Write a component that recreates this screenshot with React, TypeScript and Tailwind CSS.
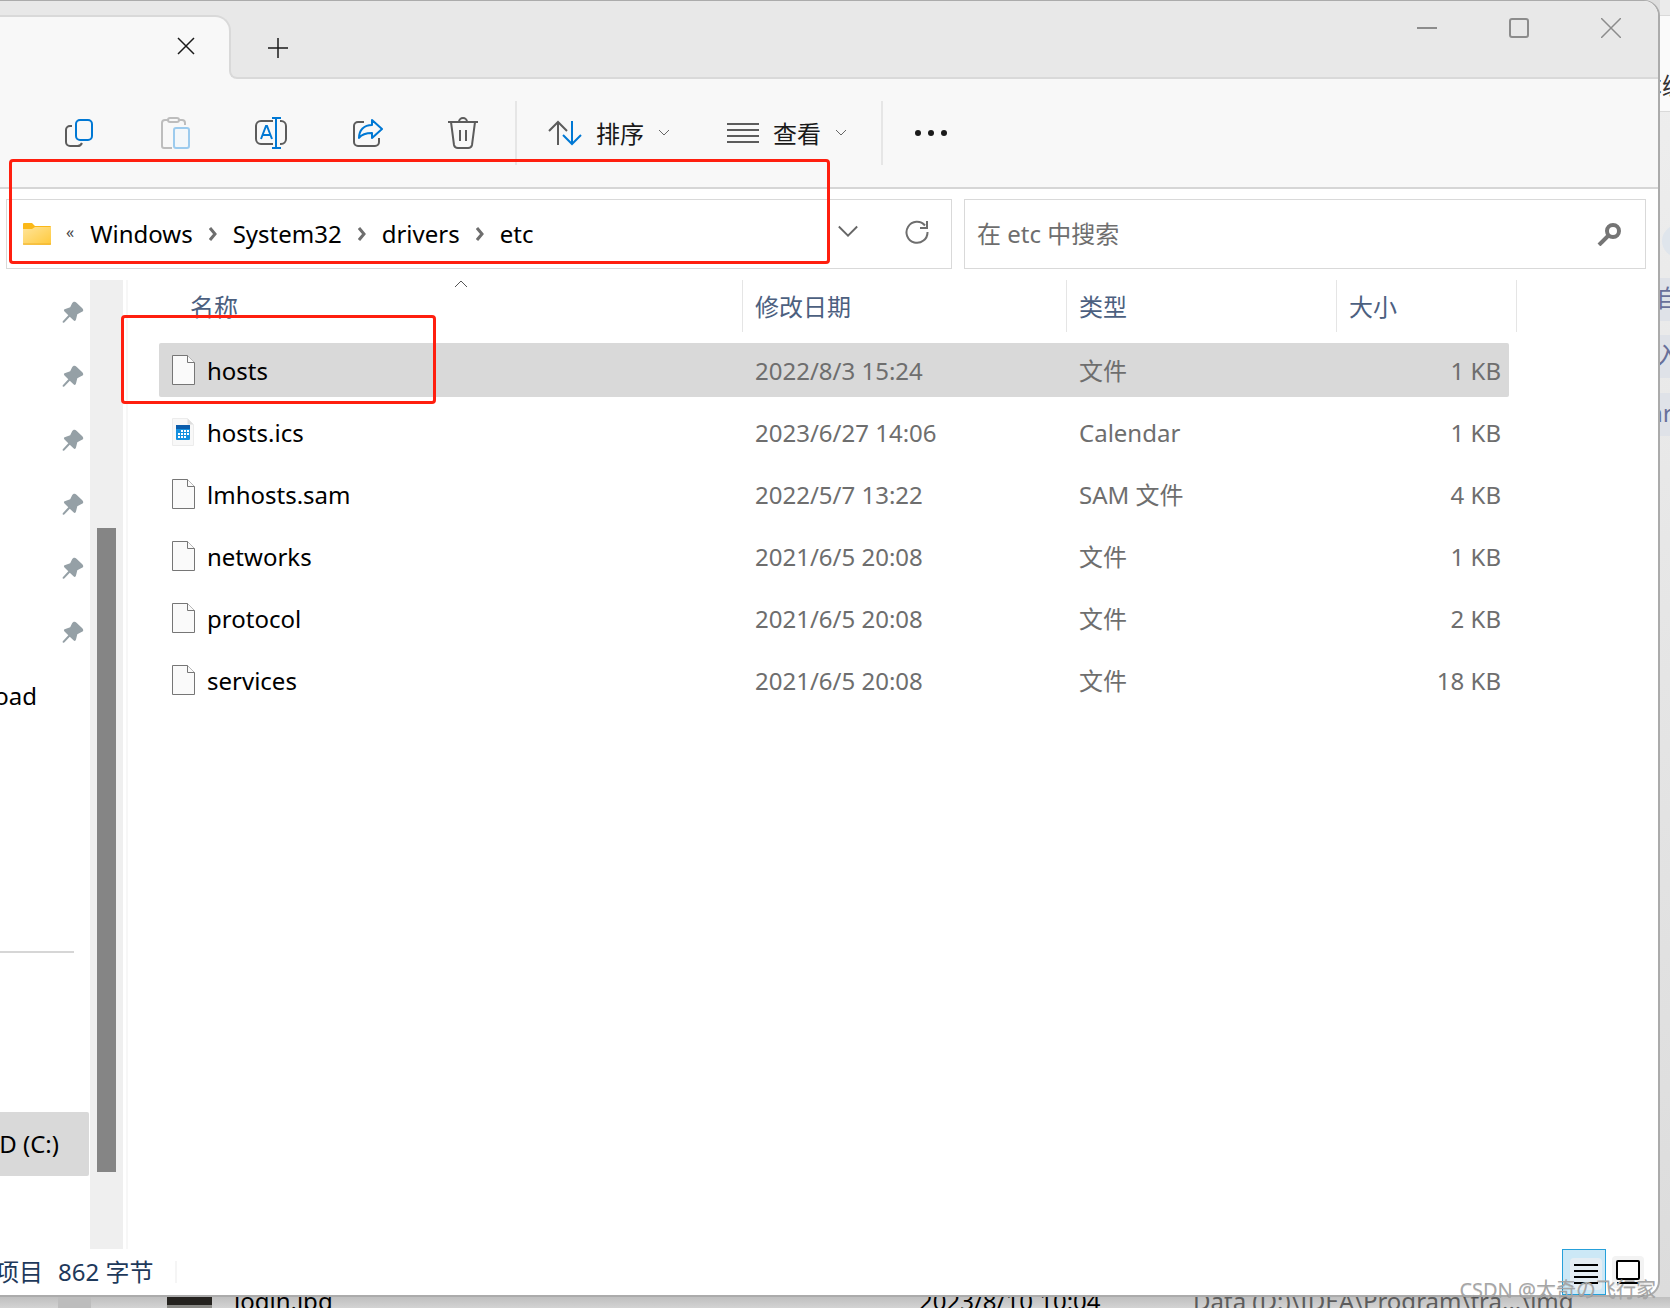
import type { ReactNode } from "react";
import { clsx } from "clsx";

interface FileEntry {
  name: string;
  modified: string;
  type: string;
  size: string;
  icon: "blank" | "calendar";
  selected?: boolean;
}

const files: FileEntry[] = [
  { name: "hosts", modified: "2022/8/3 15:24", type: "文件", size: "1 KB", icon: "blank", selected: true },
  { name: "hosts.ics", modified: "2023/6/27 14:06", type: "Calendar", size: "1 KB", icon: "calendar" },
  { name: "lmhosts.sam", modified: "2022/5/7 13:22", type: "SAM 文件", size: "4 KB", icon: "blank" },
  { name: "networks", modified: "2021/6/5 20:08", type: "文件", size: "1 KB", icon: "blank" },
  { name: "protocol", modified: "2021/6/5 20:08", type: "文件", size: "2 KB", icon: "blank" },
  { name: "services", modified: "2021/6/5 20:08", type: "文件", size: "18 KB", icon: "blank" },
];

const crumbs = ["Windows", "System32", "drivers", "etc"];
const pins = [1, 2, 3, 4, 5, 6];

const CopyIcon = () => (
  <svg width="32" height="32" viewBox="0 0 32 32" fill="none" strokeWidth="2">
    <path d="M9 9H7a4 4 0 0 0-4 4v12a4 4 0 0 0 4 4h7a5 5 0 0 0 5-3" stroke="#5c5c5c" />
    <rect x="13" y="3" width="16" height="20" rx="4" stroke="#0078d4" />
  </svg>
);

const PasteIcon = () => (
  <svg width="32" height="34" viewBox="0 0 32 34" fill="none" strokeWidth="2">
    <path d="M9 4H6a3 3 0 0 0-3 3v23a2 2 0 0 0 2 2h8M19 4h4a3 3 0 0 1 3 3v2" stroke="#bdbdbd" />
    <rect x="9" y="2" width="11" height="4" rx="2" stroke="#bdbdbd" />
    <rect x="15" y="12" width="15" height="20" rx="2" stroke="#9ccbee" fill="#f3f7fa" />
  </svg>
);

const RenameIcon = () => (
  <svg width="34" height="34" viewBox="0 0 34 34" fill="none" strokeWidth="2">
    <path d="M19 5H7a5 5 0 0 0-5 5v13a5 5 0 0 0 5 5h12M26 5h1a5 5 0 0 1 5 5v13a5 5 0 0 1-5 5h-1" stroke="#5c5c5c" />
    <path d="M7 23l5-13h1l5 13M9 19h8M22 2v30M18 2h9M18 32h9" stroke="#0078d4" />
  </svg>
);

const ShareIcon = () => (
  <svg width="32" height="32" viewBox="0 0 32 32" fill="none" strokeWidth="2" strokeLinejoin="round">
    <path d="M13 5H7a4 4 0 0 0-4 4v16a4 4 0 0 0 4 4h17a4 4 0 0 0 4-4v-4" stroke="#5c5c5c" />
    <path d="M21 3l10 9-10 9v-5c-6 0-10 1-13 5 0-8 5-13 13-13z" stroke="#0078d4" />
  </svg>
);

const TrashIcon = () => (
  <svg width="32" height="34" viewBox="0 0 32 34" fill="none" stroke="#5c5c5c" strokeWidth="2">
    <path d="M1 6h30M12 6a4 4 0 0 1 8 0M4 6l3 23a4 4 0 0 0 4 3h10a4 4 0 0 0 4-3l3-23M13 14v11M19 14v11" />
  </svg>
);

const SortIcon = () => (
  <svg width="34" height="26" viewBox="0 0 34 26" fill="none" strokeWidth="2">
    <path d="M10 25V2M1 11l9-9 9 9" stroke="#5c5c5c" />
    <path d="M24 1v23M15 15l9 9 9-9" stroke="#0078d4" />
  </svg>
);

const ChevronDown = ({ size = 12 }: { size?: number }) => (
  <svg width={size} height={size} viewBox="0 0 12 12" fill="none" stroke="#666">
    <path d="M1 3l5 5 5-5" />
  </svg>
);

const FolderIcon = () => (
  <svg width="28" height="22" viewBox="0 0 28 22">
    <defs>
      <linearGradient id="folder" x1="0" y1="0" x2="1" y2="1">
        <stop offset="0%" stopColor="#ffe499" />
        <stop offset="100%" stopColor="#ffc93a" />
      </linearGradient>
    </defs>
    <path d="M0 1a1 1 0 0 1 1-1h8l3 3h15a1 1 0 0 1 1 1v8H0z" fill="#fbb818" />
    <path d="M0 6h9l3-2h16v17a1 1 0 0 1-1 1H1a1 1 0 0 1-1-1z" fill="url(#folder)" />
    <path d="M0 21h28" stroke="#eeb02c" />
  </svg>
);

const PinIcon = () => (
  <svg width="22" height="22" viewBox="0 0 22 22" fill="#95a0a6">
    <path d="M10 2.500C11 .5 13 .2 14.500 1.700l5.800 5.600c1.500 1.500 1.200 3-.8 3.700l-4.200 2.200-1.300 5.300c-.3 1.500-1.500 1.800-2.500.8l-3.700-3.600-5.300 5.600c-1.300 1.200-2.600.2-1.500-1.300l5.300-5.800-3.800-3.700C1.500 9.500 1.800 8.300 3.300 8l4.900-1.800z" />
  </svg>
);

const FileIcon = () => (
  <svg width="24" height="30" viewBox="0 0 24 30" fill="#fafafa" stroke="#767676">
    <path d="M1.500.5h15l7 7v22h-22z" />
    <path d="M16.500.5v7h7" />
  </svg>
);

const CalendarIcon = () => (
  <svg width="24" height="30" viewBox="0 0 24 30">
    <path d="M1.500 1.500h15l6 6v21h-21z" fill="#f8f8f8" stroke="#ececec" />
    <path d="M16.500 1.500v6h6z" fill="#dedede" />
    <rect x="5" y="8" width="14" height="15" rx="1" fill="#1490df" />
    <path d="M5 8h14v4H5z" fill="#0b5cab" />
    <path d="M10 14h8M7 17h11M7 20h8" stroke="#fff" strokeWidth="2" strokeDasharray="2 1" />
  </svg>
);

function ToolButton({ label, children }: { label: string; children: ReactNode }) {
  return (
    <button aria-label={label} className="flex h-16 w-24 items-center justify-center">
      {children}
    </button>
  );
}

function TitleBar() {
  return (
    <header className="flex h-[78px] shrink-0 bg-[#e8e8e8]">
      <div className="flex w-[231px] shrink-0 flex-col justify-end">
        <div className="flex h-16 items-center justify-end rounded-tr-2xl border-t-2 border-r-2 border-[#d9d9d9] bg-[#f8f8f8] pr-[34px]">
          <button aria-label="关闭标签页" className="pb-1">
            <svg width="18" height="18" viewBox="0 0 18 18" stroke="#1a1a1a" strokeWidth="1.500">
              <path d="M1 1l16 16M17 1L1 17" />
            </svg>
          </button>
        </div>
      </div>
      <div className="relative flex flex-1 items-start justify-between border-b-2 border-[#d9d9d9]">
        {/* curve where the tab meets the toolbar */}
        <div className="absolute -bottom-0.5 -left-0.5 size-2 bg-[#f8f8f8]">
          <div className="size-full rounded-bl-lg border-b-2 border-l-2 border-[#d9d9d9] bg-[#e8e8e8]" />
        </div>
        <button aria-label="新建标签页" className="mt-[37px] ml-[37px]">
          <svg width="20" height="20" viewBox="0 0 20 20" stroke="#1a1a1a" strokeWidth="1.500">
            <path d="M10 0v20M0 10h20" />
          </svg>
        </button>
        <div className="mt-[17px] mr-[37px] flex gap-[72px]">
          <button aria-label="最小化">
            <svg width="20" height="20" viewBox="0 0 20 20" stroke="#8c8c8c" strokeWidth="2">
              <path d="M0 10h20" />
            </svg>
          </button>
          <button aria-label="最大化">
            <svg width="20" height="20" viewBox="0 0 20 20" fill="none" stroke="#8c8c8c" strokeWidth="2">
              <rect x="1" y="1" width="18" height="18" rx="2" />
            </svg>
          </button>
          <button aria-label="关闭">
            <svg width="20" height="20" viewBox="0 0 20 20" stroke="#8c8c8c" strokeWidth="1.500">
              <path d="M0 0l20 20M20 0L0 20" />
            </svg>
          </button>
        </div>
      </div>
    </header>
  );
}

function Toolbar() {
  return (
    <div className="flex h-[110px] shrink-0 items-center border-b-2 border-[#d6d6d6] bg-[#f8f8f8] pl-[31px] text-[#1a1a1a]">
      <div className="flex">
        <ToolButton label="复制"><CopyIcon /></ToolButton>
        <ToolButton label="粘贴"><PasteIcon /></ToolButton>
        <ToolButton label="重命名"><RenameIcon /></ToolButton>
        <ToolButton label="共享"><ShareIcon /></ToolButton>
        <ToolButton label="删除"><TrashIcon /></ToolButton>
      </div>
      <div className="ml-1 h-16 w-0.5 bg-[#e6e6e6]" />
      <button className="ml-[31px] flex items-center gap-3.5">
        <SortIcon />
        <span className="pt-0.5">排序</span>
        <ChevronDown />
      </button>
      <button className="ml-[57px] flex items-center gap-3.5">
        <svg width="32" height="20" viewBox="0 0 32 20" stroke="#5c5c5c" strokeWidth="2">
          <path d="M0 1h32M0 7h32M0 13h32M0 19h32" />
        </svg>
        <span className="pt-0.5">查看</span>
        <ChevronDown />
      </button>
      <div className="ml-[34px] h-16 w-0.5 bg-[#e6e6e6]" />
      <button aria-label="更多" className="ml-8">
        <svg width="32" height="8" viewBox="0 0 32 8" fill="#1a1a1a">
          <circle cx="3" cy="4" r="3" />
          <circle cx="16" cy="4" r="3" />
          <circle cx="29" cy="4" r="3" />
        </svg>
      </button>
    </div>
  );
}

function AddressRow() {
  return (
    <div className="grid shrink-0 grid-cols-[946fr_682fr] gap-3 pt-[10px] pr-3 pl-1.5">
      <nav className="relative flex h-[70px] items-center border border-[#d9d9d9] pl-4">
        <FolderIcon />
        <span className="ml-[15px] pb-1 text-base text-[#444]">«</span>
        <ol className="ml-4 flex items-center">
          {crumbs.map((crumb, i) => (
            <li key={crumb} className="flex items-center">
              <a href="#">{crumb}</a>
              {i < crumbs.length - 1 && (
                <svg className="mx-4" width="8" height="14" viewBox="0 0 8 14" fill="none" stroke="#6e6e6e" strokeWidth="3">
                  <path d="M1 1l5 6-5 6" />
                </svg>
              )}
            </li>
          ))}
        </ol>
        <div className="mr-[22px] ml-auto flex items-center gap-[46px] pb-1">
          <button aria-label="以前的位置"><ChevronDown size={22} /></button>
          <button aria-label="刷新">
            <svg width="24" height="24" viewBox="0 0 24 24" fill="none" stroke="#6e6e6e" strokeWidth="2">
              <path d="M22.500 12A10.500 10.500 0 1 1 20 5.500M22 1v7h-7" />
            </svg>
          </button>
        </div>
        <div className="pointer-events-none absolute -top-[41px] left-0.5 h-[105px] w-[821px] rounded border-3 border-[#ff1f0f]" />
      </nav>
      <label className="flex h-[70px] items-center border border-[#d9d9d9] pr-6 pl-3">
        <input
          type="search"
          aria-label="搜索"
          placeholder="在 etc 中搜索"
          className="min-w-0 flex-1 outline-none placeholder:text-[#6e6e6e] placeholder:opacity-100"
        />
        <svg width="24" height="24" viewBox="0 0 24 24" fill="none" stroke="#757575">
          <circle cx="16" cy="9" r="6" strokeWidth="4" />
          <path d="M12 13L2 23" strokeWidth="4" />
        </svg>
      </label>
    </div>
  );
}

function Sidebar() {
  return (
    <aside className="flex w-[128px] shrink-0 border-r-2 border-[#f7f7f7] whitespace-nowrap">
      <div className="w-[90px] overflow-hidden">
        {pins.map((pin) => (
          <div key={pin} className="flex h-16 items-center justify-end pr-1.5">
            <PinIcon />
          </div>
        ))}
        <div className="flex h-16 items-center justify-end pr-[53px]">Download</div>
        <div className="mt-[223px] mr-4 h-0.5 bg-[#d6d6d6]" />
        <div className="mt-[159px] mr-px flex h-16 items-center justify-end rounded-r-xs bg-[#d9d9d9] pr-[30px]">SSD (C:)</div>
      </div>
      <div className="flex w-[33px] flex-col items-center bg-[#efefef] pt-[248px]">
        <div className="h-[644px] w-[19px] bg-[#858585]" />
      </div>
    </aside>
  );
}

function FileRow({ file }: { file: FileEntry }) {
  const cell = clsx("flex h-[54px] items-center", file.selected && "bg-[#d9d9d9]");
  return (
    <tr className="h-[62px] text-[#6e6e6e]">
      <td className="p-0 pl-[31px]">
        <div className={clsx(cell, "relative gap-3 rounded-l-xs pl-3 text-black")}>
          {file.icon === "blank" ? <FileIcon /> : <CalendarIcon />}
          <span className="pt-0.5">{file.name}</span>
          {file.selected && (
            <div className="pointer-events-none absolute -top-7 -left-[38px] h-[89px] w-[315px] rounded border-3 border-[#ff1f0f]" />
          )}
        </div>
      </td>
      <td className="p-0"><div className={clsx(cell, "pt-0.5 pl-3")}>{file.modified}</div></td>
      <td className="p-0"><div className={clsx(cell, "pt-0.5 pl-3")}>{file.type}</div></td>
      <td className="p-0 pr-2"><div className={clsx(cell, "justify-end rounded-r-xs pt-0.5 pr-2")}>{file.size}</div></td>
    </tr>
  );
}

function FileList() {
  const head = "flex h-[52px] items-center border-r border-[#e5e5e5] pt-0.5";
  return (
    <main className="min-w-0 flex-1 pr-[141px]">
      <table className="w-full table-fixed border-collapse">
        <thead>
          <tr className="h-[59px] text-left align-top text-[#4c607f]">
            <th className="p-0 font-normal">
              <div className={clsx(head, "relative pl-[62px]")}>
                名称
                <svg className="absolute top-0 right-[274px]" width="14" height="8" viewBox="0 0 14 8" fill="none" stroke="#555">
                  <path d="M1 7l6-6 6 6" />
                </svg>
              </div>
            </th>
            <th className="w-[324px] p-0 font-normal">
              <div className={clsx(head, "pl-3")}>修改日期</div>
            </th>
            <th className="w-[270px] p-0 font-normal">
              <div className={clsx(head, "pl-3")}>类型</div>
            </th>
            <th className="w-[180px] p-0 font-normal">
              <div className={clsx(head, "pl-3")}>大小</div>
            </th>
          </tr>
        </thead>
        <tbody>
          {files.map((file) => (
            <FileRow key={file.name} file={file} />
          ))}
        </tbody>
      </table>
    </main>
  );
}

function StatusBar() {
  return (
    <footer className="flex h-[46px] shrink-0 items-center justify-between pr-[14px] text-[#1e395b]">
      <div className="flex items-center">
        <span className="flex w-[43px] justify-end overflow-hidden whitespace-nowrap">个项目</span>
        <span className="ml-[15px]">862 字节</span>
        <span className="ml-[22px] h-[22px] w-0.5 bg-[#f5f5f5]" />
      </div>
      <div className="flex items-center gap-1.5">
        <button aria-label="详细信息" className="flex h-[46px] w-11 items-center justify-center border border-[#26a0da] bg-[#cce8f6] pt-1 pl-1">
          <span className="flex size-8 items-center justify-center rounded bg-[#e5edf3]">
            <svg width="24" height="20" viewBox="0 0 24 20" stroke="#000" strokeWidth="2">
              <path d="M0 1h24M0 7h24M0 13h24M0 19h24" />
            </svg>
          </span>
        </button>
        <button aria-label="大缩略图" className="flex size-8 items-center justify-center rounded bg-[#f3f3f3]">
          <svg width="24" height="24" viewBox="0 0 24 24" fill="#fff" stroke="#000" strokeWidth="2">
            <rect x="1" y="1" width="22" height="18" rx="1" />
            <path d="M1 23h22" />
          </svg>
        </button>
      </div>
    </footer>
  );
}

// Sliver of the editor window that peeks out on the right
function BackgroundEditor() {
  return (
    <div className="w-[10px] shrink-0 overflow-hidden bg-linear-to-b from-[#efefef] to-[#dcdcdc] whitespace-nowrap text-[#68709a]">
      <div className="h-[15px] bg-[#ebebeb]" />
      <div className="flex h-[97px] items-center border-y border-[#d9d9d9] bg-[#fafafa] pt-11 text-[#333]">
        <span className="-ml-[22px]">本编辑</span>
      </div>
      <div className="mt-[113px] ml-0.5 size-8 rounded-full bg-[#dfe5ec]" />
      <div className="mt-[21px] flex h-[43px] items-center bg-[#dfe2e8] pb-1"><span className="-ml-1">自</span></div>
      <div className="mt-3.5 flex h-[43px] items-center bg-[#dfe2e8] pb-1"><span className="-ml-1">入</span></div>
      <div className="mt-[15px] flex h-[43px] items-center bg-[#dfe2e8] pb-1"><span className="-ml-3">nr</span></div>
    </div>
  );
}

// Explorer window underneath, only the top of one row is visible
function BackgroundExplorer() {
  return (
    <div className="flex h-[11px] shrink-0 items-start overflow-hidden bg-linear-to-b from-[#bfbfbf] to-[#d3d3d3] pl-[58px] leading-6 whitespace-nowrap text-black">
      <div className="h-full w-[33px] bg-[#bdbdbd]" />
      <div className="ml-[76px] h-full w-[45px] border-t-8 border-[#25231f] bg-[#8a8a86]" />
      <span className="-mt-2 ml-[22px] w-[685px]">login.jpg</span>
      <span className="-mt-2 w-[274px]">2023/8/10 10:04</span>
      <span className="-mt-2 text-[#5c5c5c]">Data (D:)\IDEA\Program\tra...\img</span>
    </div>
  );
}

export default function App() {
  return (
    <div className="relative flex h-screen flex-col overflow-hidden bg-[#c4c4c4] font-['Noto_Sans','Noto_Sans_CJK_SC',sans-serif] text-2xl text-black">
      <div className="flex min-h-0 flex-1 bg-[#dedede]">
        <div className="flex min-w-0 flex-1 flex-col overflow-hidden rounded-r-2xl border-t border-r-2 border-b-2 border-[#ababab] bg-white">
          <TitleBar />
          <Toolbar />
          <AddressRow />
          <div className="mt-[11px] flex min-h-0 flex-1">
            <Sidebar />
            <FileList />
          </div>
          <StatusBar />
        </div>
        <BackgroundEditor />
      </div>
      <BackgroundExplorer />
      <p className="pointer-events-none absolute right-3.5 bottom-1 text-xl leading-7 text-[#a6a6a6] text-shadow-2xs">CSDN @太奇の飞行家</p>
    </div>
  );
}
